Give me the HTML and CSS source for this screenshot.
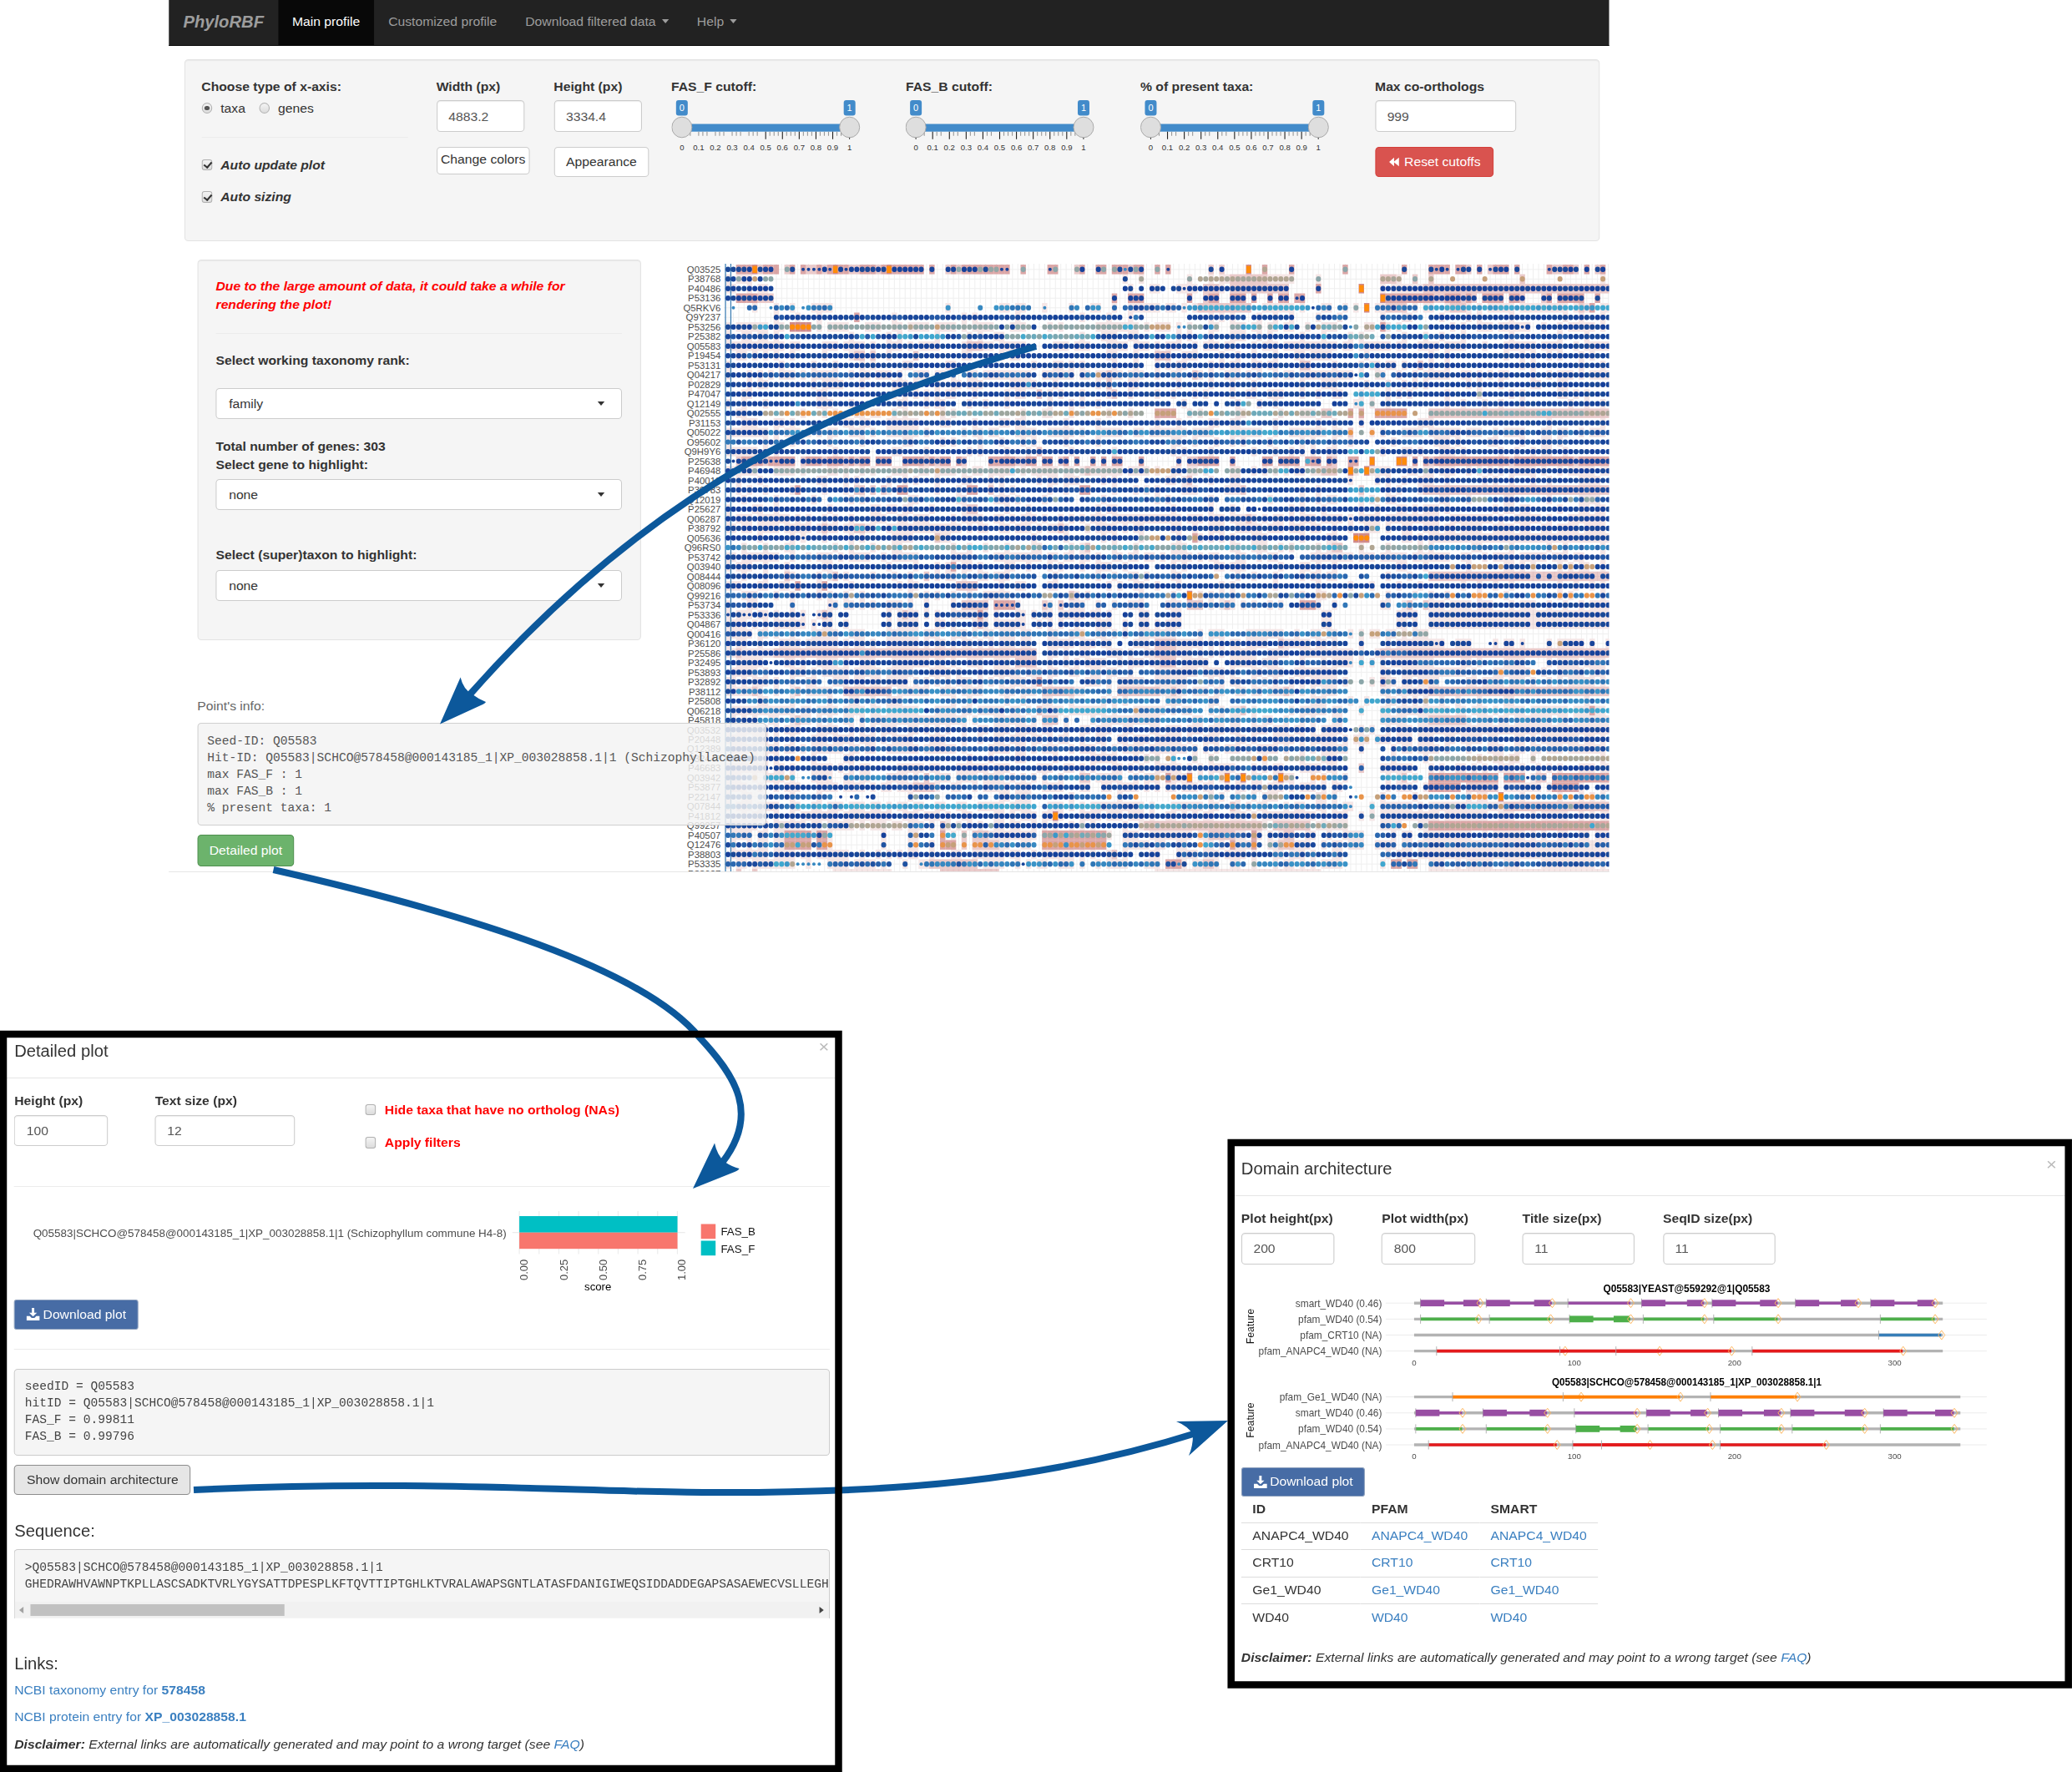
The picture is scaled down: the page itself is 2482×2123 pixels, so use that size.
FILE: index.html
```html
<!DOCTYPE html>
<html lang="en">
<head>
<meta charset="utf-8">
<title>PhyloRBF</title>
<link rel="stylesheet" href="styles.css">
</head>
<body>
<svg class="defs" width="0" height="0">
  <symbol id="ico-download" viewBox="0 0 16 16"><path d="M6.500 0h3v6h3.300L8 11 3.200 6h3.300zM0 10.500h4l2.300 2.300h3.400l2.300-2.300h4V16H0z" fill="#fff"/></symbol>
  <symbol id="ico-back" viewBox="0 0 16 16"><path d="M7.500 1v6.300L15 1v14L7.500 8.700V15L0 8z" fill="#fff"/></symbol>
</svg>
<div class="stage">

  <section class="win profile">
    <nav class="navbar">
      <a class="brand">PhyloRBF</a>
      <a class="tab active">Main profile</a>
      <a class="tab">Customized profile</a>
      <a class="tab">Download filtered data <i class="caret"></i></a>
      <a class="tab">Help <i class="caret"></i></a>
    </nav>

    <div class="well top">
      <div class="axis">
        <b class="lbl">Choose type of x-axis:</b>
        <div class="radios"><i class="radio on"></i><span>taxa</span><i class="radio second"></i><span>genes</span></div>
        <hr>
        <label class="opt"><i class="check on"></i><span>Auto update plot</span></label>
        <label class="opt"><i class="check on"></i><span>Auto sizing</span></label>
      </div>
      <div class="col"><b class="lbl">Width (px)</b><div class="input w101">4883.2</div><div class="btn plain tight">Change colors</div></div>
      <div class="col"><b class="lbl">Height (px)</b><div class="input w101">3334.4</div><div class="btn plain">Appearance</div></div>
      <div class="col"><b class="lbl">FAS_F cutoff:</b><svg class="slider" data-first="5" viewBox="0 0 230 70" preserveAspectRatio="none"></svg></div>
      <div class="col"><b class="lbl">FAS_B cutoff:</b><svg class="slider" data-first="0" viewBox="0 0 230 70" preserveAspectRatio="none"></svg></div>
      <div class="col"><b class="lbl">% of present taxa:</b><svg class="slider" data-first="0" viewBox="0 0 230 70" preserveAspectRatio="none"></svg></div>
      <div class="col"><b class="lbl">Max co-orthologs</b><div class="input w162">999</div><div class="btn danger"><svg class="ico"><use href="#ico-back"/></svg> Reset cutoffs</div></div>
    </div>

    <div class="main">
      <div class="side">
        <div class="well pick">
          <p class="warn">Due to the large amount of data, it could take a while for rendering the plot!</p>
          <hr>
          <b class="lbl rank">Select working taxonomy rank:</b>
          <div class="select">family<i class="caret"></i></div>
          <b class="lbl total">Total number of genes: 303</b>
          <b class="lbl gene">Select gene to highlight:</b>
          <div class="select">none<i class="caret"></i></div>
          <b class="lbl taxon">Select (super)taxon to highlight:</b>
          <div class="select">none<i class="caret"></i></div>
        </div>
        <div class="info">Point's info:</div>
        <pre class="point">Seed-ID: Q05583
Hit-ID: Q05583|SCHCO@578458@000143185_1|XP_003028858.1|1 (Schizophyllaceae)
max FAS_F : 1
max FAS_B : 1
% present taxa: 1</pre>
        <div class="btn success">Detailed plot</div>
      </div>
      <svg id="heat" viewBox="815 311 1113 733" preserveAspectRatio="none"></svg>
    </div>
  </section>

  <section class="win detail">
    <header><h4>Detailed plot</h4><span class="close">×</span></header>
    <div class="fields">
      <div class="f1"><b class="lbl">Height (px)</b><div class="input">100</div></div>
      <div class="f2"><b class="lbl">Text size (px)</b><div class="input">12</div></div>
      <div class="flags">
        <label><i class="check"></i>Hide taxa that have no ortholog (NAs)</label>
        <label><i class="check"></i>Apply filters</label>
      </div>
    </div>
    <hr>
    <svg id="score" viewBox="17 1440 976 118" preserveAspectRatio="none"></svg>
    <div class="btn primary"><svg class="ico"><use href="#ico-download"/></svg> Download plot</div>
    <hr class="second">
    <pre class="ids">seedID = Q05583
hitID = Q05583|SCHCO@578458@000143185_1|XP_003028858.1|1
FAS_F = 0.99811
FAS_B = 0.99796</pre>
    <div class="btn grey">Show domain architecture</div>
    <h4 class="seqh">Sequence:</h4>
    <div class="seq">
      <pre>&gt;Q05583|SCHCO@578458@000143185_1|XP_003028858.1|1
GHEDRAWHVAWNPTKPLLASCSADKTVRLYGYSATTDPESPLKFTQVTTIPTGHLKTVRALAWAPSGNTLATASFDANIGIWEQSIDDADDEGAPSASAEWECVSLLEGH</pre>
      <div class="scroll"><i class="al"></i><i class="thumb"></i><i class="ar"></i></div>
    </div>
    <h4 class="linkh">Links:</h4>
    <p class="line"><a>NCBI taxonomy entry for <b>578458</b></a></p>
    <p class="line"><a>NCBI protein entry for <b>XP_003028858.1</b></a></p>
    <p class="line note"><b>Disclaimer:</b> External links are automatically generated and may point to a wrong target (see <a>FAQ</a>)</p>
  </section>

  <section class="win domain">
    <header><h4>Domain architecture</h4><span class="close">×</span></header>
    <div class="fields">
      <div><b class="lbl">Plot height(px)</b><div class="input w107">200</div></div>
      <div><b class="lbl">Plot width(px)</b><div class="input w107">800</div></div>
      <div><b class="lbl">Title size(px)</b><div class="input w129">11</div></div>
      <div><b class="lbl">SeqID size(px)</b><div class="input w129">11</div></div>
    </div>
    <svg id="arch" viewBox="1487 1530 960 228" preserveAspectRatio="none"></svg>
    <div class="btn primary"><svg class="ico"><use href="#ico-download"/></svg> Download plot</div>
    <table>
      <tr><th>ID</th><th>PFAM</th><th>SMART</th></tr>
      <tr><td>ANAPC4_WD40</td><td><a>ANAPC4_WD40</a></td><td><a>ANAPC4_WD40</a></td></tr>
      <tr><td>CRT10</td><td><a>CRT10</a></td><td><a>CRT10</a></td></tr>
      <tr><td>Ge1_WD40</td><td><a>Ge1_WD40</a></td><td><a>Ge1_WD40</a></td></tr>
      <tr><td>WD40</td><td><a>WD40</a></td><td><a>WD40</a></td></tr>
    </table>
    <p class="line note"><b>Disclaimer:</b> External links are automatically generated and may point to a wrong target (see <a>FAQ</a>)</p>
  </section>
</div>

<svg class="arrows" viewBox="0 0 2482 2123">
  <g fill="none" stroke="#0c589b" stroke-width="8">
    <path d="M1241 415C1005 484 785 580 562 833"/>
    <path d="M327.500 1042C560 1095 770 1160 838 1243C882 1290 910 1335 865 1393"/>
    <path d="M232 1785C500 1772 700 1788 850 1788C1070 1789 1250 1775 1436 1716"/>
  </g>
  <g fill="#0c589b">
    <path d="M527 867.500L551.600 811.500Q555 826 566 832Q574 838 582 841Q581 843 576 845Z"/>
    <path d="M830 1424L856 1369.500Q859 1384 868 1392Q877 1398 885.500 1400Q885 1402 880 1404Z"/>
    <path d="M1471 1702L1409 1703Q1424 1709 1429 1719Q1429 1733 1424 1744Z"/>
  </g>
  <g fill="none" stroke="#000" stroke-width="8.500">
    <rect x="4" y="1239" width="1000.500" height="880"/>
    <rect x="1474.700" y="1369" width="1003" height="649.500"/>
  </g>
</svg>
<script src="plots.js"></script>
</body>
</html>
```
FILE: styles.css
```css
* { box-sizing: border-box; }
body { margin: 0; width: 2482px; height: 2123px; overflow: hidden; position: relative; background: #fff;
  font: 15.08px/21.5px "Liberation Sans", Arial, sans-serif; color: #333; }
.defs { position: absolute; }
/* The windows are captured slightly wider than tall */
.stage { position: absolute; left: 0; top: 0; width: 2382px; height: 2123px; transform: scaleX(1.042); transform-origin: 0 0; }
.win { position: absolute; background: #fff; }
.arrows { position: absolute; left: 0; top: 0; width: 2482px; height: 2123px; }
a { color: #3a7fc0; }
h4 { margin: 0; font-size: 19.4px; line-height: 22px; font-weight: 400; }
hr { border: 0; border-top: 1.5px solid #ececec; margin: 0; }
p { margin: 0; }
pre { margin: 0; font: 14px/20px "Liberation Mono", "Courier New", monospace; color: #444; }
.lbl { display: block; font-weight: 700; height: 21.5px; white-space: nowrap; }
.input { height: 38px; border: 1.3px solid #ccc; border-radius: 4.5px; background: #fff; color: #555;
  padding: 0 13px; line-height: 37px; box-shadow: inset 0 1px 1px rgba(0,0,0,.08); }
.btn { display: flex; align-items: center; justify-content: center; gap: 3px; border: 1.3px solid #ccc; border-radius: 4.5px; height: 36px; white-space: nowrap; }
.ico { width: 16px; height: 15px; flex: none; }
.danger .ico { width: 16px; height: 12px; }
.caret { display: inline-block; border: 4.8px solid transparent; border-top: 5px solid currentColor; border-bottom: 0; vertical-align: 3px; margin-left: 2.5px; }
.radio, .check { display: inline-block; width: 12.5px; height: 13.5px; background: linear-gradient(#f4f4f4, #dcdcdc); border: 1px solid #b0b0b0; flex: none; position: relative; }
.radio { border-radius: 50%; }
.check { border-radius: 3px; }
.radio.on::after { content: ""; position: absolute; left: 2.5px; top: 3px; width: 5.5px; height: 5.5px; border-radius: 50%; background: #555; }
.check.on::after { content: ""; position: absolute; left: 3.5px; top: .5px; width: 3.500px; height: 7px; border: solid #333; border-width: 0 2.2px 2.2px 0; transform: rotate(40deg); }
.well { background: #f5f5f5; border: 1.3px solid #e3e3e3; border-radius: 4.5px; box-shadow: inset 0 1px 1px rgba(0,0,0,.05); }

/* Main profile window */
.profile { left: 194.3px; top: 0; width: 1656px; height: 1045px; overflow: hidden; border-bottom: 1.3px solid #e6e6e6; }
.navbar { display: flex; height: 55px; background: #222; border-bottom: 1.3px solid #080808; line-height: 52.5px; }
.navbar a { padding: 0 16.3px; color: #9d9d9d; white-space: nowrap; }
.navbar .brand { font-size: 19.4px; font-weight: 700; font-style: italic; }
.navbar .active { background: #080808; color: #fff; }
.well.top { margin: 16px 0 0 17.5px; width: 1627px; height: 218px; padding: 20.500px 0 0 18.800px; display: grid; grid-template-columns: 270px 135px 135px 269.700px 269.700px 269.700px 1fr; }
.radios { display: flex; align-items: center; height: 21px; margin-top: 5px; }
.radios span { margin-left: 9.500px; }
.radios .second { margin-left: 15.500px; }
.axis hr { width: 237px; margin-top: 24px; }
.opt { display: flex; align-items: center; gap: 9.5px; font-weight: 700; font-style: italic; height: 21.5px; margin: 21.500px 0 17px; }
.opt + .opt { margin-top: 0; }
.col .input { margin: 6px 0 18px; }
.w101 { width: 101.5px; }
.w162 { width: 162px; }
.plain { background: #fff; }
.btn.plain { width: 109.500px; }
.btn.tight { width: 107.500px; height: 32.5px; padding-bottom: 3px; }
.danger { width: 136px; background: #d9534f; border-color: #d43f3a; color: #fff; }
.slider { display: block; width: 220.700px; height: 70px; margin-top: 5px; }
.main { display: flex; margin-top: 22.3px; }
.side { width: 555.3px; flex: none; padding-left: 32.5px; position: relative; z-index: 1; }
#heat { flex: none; width: 1068.100px; height: 733px; display: block; margin-left: 32.400px; }
.well.pick { width: 509.900px; height: 456px; padding: 20px 20.500px 0 20.300px; }
.warn { color: #f00; font-weight: 700; font-style: italic; margin-bottom: 23.500px; }
.select { height: 37px; line-height: 35.5px; background: #fff; border: 1.3px solid #ccc; border-radius: 4.500px; padding: 0 19px 0 14px; display: flex; justify-content: space-between; align-items: center; color: #333; }
.rank { margin: 21.500px 0 22px; }
.total { margin-top: 22.500px; }
.gene { margin-bottom: 6.500px; }
.taxon { margin: 43px 0 8px; }
.info { margin: 67.500px 0 10px; color: #666; }
.point { width: 653.900px; height: 122.500px; padding: 11px 10.500px; background: rgba(243,243,243,.83); border: 1.3px solid #cfcfcf; border-radius: 4.500px; color: #555; }
.success { width: 111.500px; height: 37.500px; margin-top: 11.500px; background: #6cb36c; border-color: #4e8f4e; color: #fff; }

/* Dialogs */
.win header { display: flex; justify-content: space-between; border-bottom: 1.5px solid #e5e5e5; }
.close { font-size: 21px; color: #bbb; }
.detail { left: 0; top: 1235px; width: 968px; height: 888px; padding: 7.500px 7.7px; }
.detail > * { margin-left: 8.800px; margin-right: 6.600px; }
.detail > header { margin: 0; padding: 5.500px 7px 0 8.800px; height: 49.500px; }
.detail .close { margin-top: -5px; }
.detail .fields { display: flex; margin-top: 15.500px; height: 113px; }
.f1 { width: 161.700px; } .f1 .input { width: 108px; }
.f2 { width: 241.600px; } .f2 .input { width: 161px; }
.detail .input { height: 37px; line-height: 35.500px; margin-top: 7px; }
.flags { padding-top: 11px; }
.flags label { display: flex; align-items: center; gap: 10px; height: 22px; margin-bottom: 17.500px; color: #f00; font-weight: 700; white-space: nowrap; }
#score { display: block; width: 936.700px; height: 118px; margin-top: 17px; }
.primary { width: 142.500px; height: 36.500px; background: #476ca5; border-color: #8da0bd; border-radius: 3px; color: #fff; }
hr.second { margin-top: 23px; }
.ids { margin-top: 23px; height: 103.500px; padding: 10px 11px; background: #f5f5f5; border: 1.3px solid #ccc; border-radius: 4.500px; }
.grey { width: 203px; margin-top: 11px; background: #e6e6e6; border-color: #8c8c8c; }
.seqh { margin-top: 32.500px; }
.seq { margin-top: 11px; height: 82.500px; background: #f5f5f5; border: 1.3px solid #ccc; border-bottom: 0; border-radius: 4.500px 4.500px 0 0; overflow: hidden; }
.seq pre { padding: 11px 11px 0; height: 62px; }
.scroll { display: flex; align-items: center; height: 19px; background: #f1f1f1; padding: 0 6px 0 5px; }
.scroll .al { border: 4.500px solid transparent; border-left: 0; border-right: 5px solid #a3a3a3; }
.scroll .ar { border: 4.500px solid transparent; border-right: 0; border-left: 5px solid #444; margin-left: auto; }
.thumb { width: 291.500px; height: 14px; background: #c1c1c1; margin-left: 8px; }
.linkh { margin-top: 43.500px; }
.line { height: 32.500px; line-height: 21.500px; white-space: nowrap; }
.linkh + .line { margin-top: 9.500px; }
.note { font-style: italic; word-spacing: .07px; }

.domain { left: 1411.2px; top: 1365px; width: 970.700px; height: 658px; padding: 7.500px 8px; }
.domain > * { margin-left: 7.700px; }
.domain > header { margin: 0; padding: 16px 9.500px 0 7.700px; height: 60.500px; }
.domain .close { margin-top: -5px; }
.domain .fields { display: grid; grid-template-columns: repeat(4, 161.600px); margin-top: 15.500px; height: 81px; }
.domain .input { height: 37.500px; line-height: 36px; margin-top: 7px; }
.w107 { width: 107.500px; } .w129 { width: 129px; }
#arch { display: block; width: 921.300px; height: 228px; }
.domain .primary { height: 35px; }
table { border-collapse: collapse; width: 410.500px; table-layout: fixed; margin-top: -.7px; }
th, td { text-align: left; padding: 0 0 0 13px; height: 32.500px; line-height: 20px; border-top: 1.5px solid #ddd; white-space: nowrap; }
td { padding-bottom: 1.500px; }
th { border-top: 0; }
.domain .note { margin-top: 20.500px; }
```
FILE: plots.js
```js
const el = (id, html) => { document.getElementById(id).innerHTML = html; };

/* range sliders */
document.querySelectorAll('.slider').forEach(s => {
  const first = +s.dataset.first;
  let h = '<rect x="12" y="29.5" width="202" height="9.2" fill="#428bca"/>';
  for (let i = 0; i <= 40; i++) {
    const big = i % 4 === 0, x = 12.4 + i * 5.02;
    if (!big && i % 4 === 3 && i < 20) continue;
    const tall = big && i / 4 >= first;
    h += `<path d="M${x} 38.7v${tall ? 9 : 5}" stroke="${tall ? '#222' : '#999'}" stroke-width="1.1"/>`;
  }
  for (let i = 0; i <= 10; i++)
    h += `<text x="${12.4 + i * 20.08}" y="61.5" font-size="9.6" text-anchor="middle" fill="#333">${i === 0 ? '0' : i === 10 ? '1' : '0.' + i}</text>`;
  [12.4, 213.3].forEach((x, i) => {
    h += `<rect x="${x - 7}" y="1" width="14" height="18.5" rx="3" fill="#428bca"/><text x="${x}" y="14.5" font-size="11" text-anchor="middle" fill="#fff">${i}</text>`;
    h += `<ellipse cx="${x}" cy="33.5" rx="12" ry="12.3" fill="#dedede" stroke="#aaa"/>`;
  });
  s.innerHTML = h;
});

/* phylogenetic profile: id, dots ("from-to type"), shaded cells ("from-to:level"), default shading */
const rows = [
['Q03525','0-8N 5O 11g 12N 14-17s 18N 19s 20O 21N 22s 23-36N 30O 38N 41-49N 43g 47g 49-50g 51-52s 55g 60s 61g 65g 66N 69N 70g 72g 73N 74k 75N 76g 77N 80g 82s 90N 92N 97O 100t 105N 115g 126N 131N 132s 133N 134s 136s 137-138N 140N 142s 143-145N 147N 153s 154-158N 160N 162-163N','9:3',3],
['P38768','0-1N 2g 3-4N 5T 6N 7-8g 74N 77t 86g 88-105t 110g 122-125t 128g 131t 135T 141T 148T 155T 163T','94-100:2 122-124:2 128:2 131:2 148:2',1],
['P40486','0-8N 74-75N 77N 79-81N 83-84N 85s 86-104N 110N 118O 122-164N','89-91:2 94-104:2 110:3 130-164:2',1],
['P53136','0-8N 72N 75-77N 86N 89-91N 94-96N 98N 101N 103-104N 106s 107N 122O 123-164N 140. 145. 149-151. 154. 160-161. 163-164.','',3],
['Q5RKV6','1k 4-5d 8k 9-12d 14k 15-19d 17b 41d 47d 50-56d 59k 64-65d 67-69d 72d 74-75d 76-84b 85k 86-108c 109s 110-112d 114-115d 117g 119O 121-128d 124b 130-164c','88-97:2 123-126:2 135-137:2 159:2 161:3',1],
['Q9Y237','9-73n 75s 76-77b 86-96n 98-105n 110-115b 122-129b 131-164N','24:3',0],
['P53256','0-4N 5g 6-7c 8-9N 10-11g 12-15P 16-17g 19-50g 34t 39T 51N 52g 53N 54-56g 57N 59-73g 74-75c 76-78g 79-82T 84k 85k 86-88g 89N 90c 91g 94-95g 96-98c 99g 101g 102-103c 104N 105c 106N 108g 109N 110-114x 115N 116k 117g 119-120t 121c 122N 123-126c 127-128N 129c 130g 131-164N 148s 150.','12-15:4 122:3',1],
['P25382','0-164n 11c 25c 27c 32-34c 36-40c 44g 52-68y 79c 82-83c 88c 111c 116-120x 121. 123g 130c','',0],
['Q05583','0-164N 58. 75. 88. 117-118d','45-47:2',1],
['P19454','0-164N 4d 117d 119d','24-25:2 27:2 80-82:2 35:2',0],
['P53131','0-164N 11d 78-79. 117-119b 120c 125.','107-108:2 129:2',0],
['Q04217','0-6N 7-130b 24-32N 33. 38. 43. 58. 65. 69T 117s 118c 120. 121g 123. 131-164N','71:2 87:2',1],
['P02829','0-164N 56d 72d 123d','71:2',0],
['P47047','0-164N 116. 117-121c 140g','58:2 72:2',0],
['Q12149','0-164N 13d 43. 83. 86. 90. 92. 96c 97g 98. 111-112. 116. 117k 118c 119. 120g 121.','',0],
['Q02555','0-6N 7-77x 11o 14-15o 19-30o 37o 39o 64o 68-69o 72o 78-79. 80-83T 84-85. 86-115x 90o 116T 117. 118T 119-120. 121-126o 127. 128T 129-130. 131-164g 141c 145-153y 160-164t','80-83:3 111-112:2 116:3 118:3 121-126:3 131-164:2',0],
['P31153','0-164N 97c 117. 119.','',0],
['Q05022','0-7N 8-115d 90-102c 116o 117. 118g 119. 120o 121. 122-128b 129-130c 131-164b','116:2',1],
['O95602','0-164b 26-27N 39-42N 58. 120. 131-164n','',0],
['Q9H9Y6','0-164N 27. 72c 108. 116-117c 119-120c 121g','58:2',0],
['P25638','0-164N 1s 8-9s 13. 27. 31-32. 42. 45-48. 50s 58. 61. 64. 66-67. 69. 71. 74-76. 78-83. 85. 92-93. 95-99. 102. 107. 108c 109s 111. 114-115. 116-117s 118-119. 120O 121-124. 125-126O 127. 129.','',3],
['P46948','0-1N 2c 3-8N 5g 9-73g 34t 39T 53c 74-75N 76g 77N 78g 79-82T 83N 84-85N 86-88g 89-90c 91g 92. 93-95g 96-100N 101-102g 103-104c 105-107N 108-109g 110-114x 115N 116O 117g 118c 119O 120t 121c 122-164N 130g 140c','67:2 111-113:2',1],
['P40018','0-164N 77. 116s 117-120.','86:2',0],
['P39783','0-164n 24d 28c 30d 78d 116-121c','13:3 24-25:2 27:2 29:2 32-33:3 45-46:3 49:2 66-67:3 96:2 118:2 130-164:2 137.',0],
['Q12019','0-6N 7-164b 18. 20c 33g 43c 49c 61g 65. 92. 101c 116-120c 121t 135-145b 139-141g 149-150c 157g 160-161g','',0],
['P25627','0-164N 91. 96. 99s','45-46:2',0],
['Q06287','0-164N 116s','9-11:1 79-83:1 97:2',1],
['P38792','0-164N 24-25c 28c 31c 67t 120t 121c 122.','18:2 24-25:2 62:2',1],
['Q05636','0-164N 14s 39T 77-78g 79-80T 82T 86g 87T 116. 117-119P 120-121.','39:2 117-119:4 87:3 131-164:1',0],
['Q96RS0','0-2d 3-115y 24t 28t 30t 33-34t 54t 56t 59-60d 62b 68t 116-117. 118t 119. 120t 121. 122-130g 131-164d 145g 154T','67:2 113-114:2',0],
['P53742','0-164b 0-9N 106. 131-164n','',1],
['Q03940','0-164N 42d 79. 135T 139-141T 144T 150T 155T 157T 160-161T','42:3',0],
['Q08444','0-6N 7-115b 58. 77g 91T 92. 116-117. 118-119b 120-121. 122-129b 130c 131-164n 150. 152. 154. 162.','11:2 20:2 37:2 131-164:2',0],
['Q08096','0-164N 58. 72. 121.','13:3 18:3 43-46:2',0],
['Q99216','0-164b 23t 35t 59-60t 64t 82t 84c 86O 87-88T 96T 101-102t 105g 110-111T 112t 114o 116g 118T 119-120d 121T 122. 127-130d 131-164b 135o 139-141o 144o 150o 155o 157o 160-161o','5:1 64:2',0],
['P53734','0-8n 12b 19s 20b 22-34b 37N 42-48n 50-53s 54b 59s 60b 62s 63-66b 69-70b 72-78b 79. 81-94b 95. 96-103b 104. 105-110n 113N 115b 122-123b 125-130d 131-164N','44-48:2 50-53:3 59:2 62:2 86-88:2 93:2 107-109:3 127:2 130:2',1],
['P53336','0s 1-2N 3-4s 5-13N 7s 14s 16-17s 18-19N 21-22N 29-30N 32-35N 37N 39-48n 50-54N 55s 57-60N 62-71N 74-75N 77-78N 80-84N 111-112N 125-128N 131-164N 150.','18:2 33:2 47:3 131-164:1',1],
['Q04867','0-13N 14s 16-17s 18-19N 21-22N 29-30N 32-35N 37N 39-54N 49. 55s 57-60N 62-71N 74-75N 77-78N 80-84N 111-112N 125-128N 131-164N 150.','47:2 131-164:1',1],
['Q00416','0-4n 6-115d 18T 66T 74N 89. 111T 116k 118g 120-121T 122-124d 125-127t 128b 129-130g','81-83:1 66:1',1],
['P36120','0-115N 58. 72. 74. 118b 122-131N 132s 133N 135-138N 142-143s 145-146N 148s 153N 155T 156-159N 161N 164N','80-83:2 103:2',1],
['P25586','0-164N 25d 58. 118-126b','2:2 9-57:2 80-83:2 122-164:2',1],
['P32495','0-164N 8s 20-21c 90. 92. 100-110b 116k 117. 118c 119. 120c 121. 128-164b 151-152. 156N','54-57:2 81-83:2',1],
['P53893','0-164b 0-4N 36-52N 76. 84-86N 103-115N 117-121. 116. 122-130N 144o 150o','',1],
['P32892','0-164b 0-6N 18. 22-33N 34. 65. 72. 88g 93. 105-110N 111c 116g 117. 118g 119. 120g 121. 122N 123g 125. 126-128N 130o 133. 142-164d','58:3 80-83:1 122:2',1],
['P38112','0-1N 2-164d 22-23N 26-29n 72. 84N 106N 116-121. 127-131N 142-146n','5:2 13:2 22-30:2 59-64:2 73-80:2 83:2 104:2 131-164:2',1],
['P25808','0-164d 0-3N 6N 24N 31N 46N 81. 92-93. 106N 118. 119-121c 125-129n 130t','83:1',0],
['Q06218','0-4n 5-164d 23-37c 37N 51N 60N 62-70c 76T 89. 94-102c 116-121. 118c 122-123c 129N 130-164c','58:2 161:3 96:2',1],
['P45818','0-164d 0-5n 24. 45. 58. 62. 64. 66-67. 112. 116-121.','13:2 27-40:1 59-61:2 131-137:2',1],
['Q03532','0-164N 110. 116s 117g 118b 119g 120b 121.','131-164:1',1],
['P20448','0-164n 72. 116. 117T 118d 119T 120. 121d 128.','83:1',1],
['Q12389','0-164b 88. 116-117. 118b 119-121. 123.','',1],
['P32447','0-77N 13o 19-21. 78-80g 81. 82T 83c 84-85k 86b 87g 88-89. 90-91g 92-93. 94-97g 98T 99N 100o 101-102g 103. 104-111x 112N 113-114N 115g 116-121. 122-130b 131-164t 132-137g 148-149. 151.','',0],
['P46683','0-164N 8s 94-97b 116-121. 118b 129-130.','80-83:1 118:2',1],
['Q03942','0-4b 5T 7-12c 11T 13. 14-15k 16-18b 19k 22-41d 42. 43-79d 58. 74. 80-81T 82b 83T 84-85N 86O 87. 88-91c 92T 93O 94-95d 96O 97T 98-100c 101T 102d 103O 104T 105g 106s 109-111o 112-115d 122-129c 131-164d 144. 149s 153.','37:2 66-67:2 82:3 126:2 131-143:3 145-148:3 151-152:2 154-164:3',1],
['P53877','0-164n 38-60b 68-69. 81. 100t 112. 116k 117-121. 129. 144. 152. 161.','35-38:2 131-136:3 138-143:2 154-158:3',1],
['P22147','0-19b 5. 21s 23s 24b 26s 27b 34-39b 35g 39g 41-45b 47-48b 50-70b 71o 73-75b 76o 83o 84-115d 88T 90g 93. 96g 99. 101-103t 105-107N 108o 110g 111o 114-115. 116s 117k 118o 121T 122b 123o 124b 126-127o 129-130T 128N 131-164d 135o 139-141o 144O 150o 155o 157o 160-161o','',0],
['Q07844','0-12b 13-164c 20b 58. 59b 70-76b 85-115d 116k 117-119. 120c 121. 122-164b 135g 138-141c 144T 157g','94:2 131-143:1 145-164:2',1],
['P41812','0-164N 58. 61O 98T 117. 116. 118b 119. 120g 121.','24-30:1 122-132:1',1],
['Q99257','0-22n 10g 18g 23-33t 34-38b 36d 39. 40-76N 41t 43g 49g 66g 77-99t 80g 85g 100-115x 122-129b 126o 124c 128g 127. 130g 131-164t 161c','9:1 40:2 78-99:2 102-108:2 131-164:3',1],
['P40507','0-9b 5. 8d 11-16c 10d 17b 18g 19c 29N 34-38b 35T 40o 41-42c 44g 46-49d 50-56N 57b 59-71x 61c 63c 72. 74-115n 88o 89-95d 98T 100. 110. 116-118d 121-124b 125. 126-127N 128. 129-130b 131-164N 161.','11-15:3 17-18:3 34:1 40:3 44:2 46-48:2 59-70:3 98:3 90-94:2 104-105:2',1],
['Q12476','0-7b 8-10d 11-15T 13c 16-17b 18-19o 29b 34-38b 35o 40o 41-42T 44o 46-47o 48b 49o 50-56d 57d 59-62o 63d 64-70o 61T 66T 69T 71d 74-115b 88o 89-90c 94o 98o 100. 101g 103t 104-105o 106N 110. 116-118d 121-124b 126-128b 125. 129-164b 161.','11-15:3 17-18:3 40-42:3 44:2 46-50:2 59-70:3 94:3 98:3 103-105:2 131-164:1',1],
['P38803','0-164N 5-8b 76. 81-83. 85-90b 102-115b 117-121. 116. 122-123d','72:2 131-164:1',1],
['P53335','0-8b 9-12c 12t 13-17k 19-30b 31. 33b 34-35. 36k 37-80d 43b 55s 65. 67. 81. 82-83b 84k 85N 86. 87-91d 92-93. 94-115d 97. 98g 116-121. 122c 123. 124-128b 131-164b','9-10:1 38-46:2 82-84:3 89-90:2 124-125:3 127-128:3 138-141:1',1],
['P38627','','2:2 5:2 20-30:1 40-50:2 80-110:1 131-164:1',0]
];
const solid = { N: ['#17449a','#15409a','#1a4897'], n: ['#17449a','#17449a','#2458a6','#1a4a9b'], b: ['#1f52a1','#2b68b0','#1a489c','#3278b8','#2860aa'],
  d: ['#3788c1','#2f76b6','#3a93c7','#2b69b0'], c: ['#3fa7cf','#3b97c8','#45a9cc'], g: ['#8ba6a9','#93a6a5'], t: ['#b0a592','#a6a69a'], T: ['#c5a07a'],
  o: ['#e8944a'], O: ['#ff8c0a'], P: ['#ff8c0a'], x: ['#8ba6a9','#6faab9','#b0a592','#9da69e'], y: ['#6aaabc','#7ba8b2','#45a9cc','#8ba6a9'], s: ['#17449a'], k: ['#3788c1'] };
const shade = [0, .2, .42, .7, .92];
let seed = 7;
const rnd = () => (seed = (seed * 1103515245 + 12345) % 2147483648) / 2147483648;
const X0 = 872.2, DX = 6.43, Y0 = 322.8, DY = 11.49;
let tiles = '', blanks = '', dots = '', labels = '', grid = '';
for (let c = 0; c < 165; c++) grid += `<path d="M${X0 + c * DX} 316V1044"/>`;
const columnTint = Array.from({ length: 165 }, () => rnd());
rows.forEach(([id, spec, pink, base], r) => {
  const y = Y0 + r * DY, cell = Array(165).fill('.'), level = Array(165).fill(0);
  grid += `<path d="M867 ${y}H1928"/>`;
  (spec.match(/\S+/g) || []).forEach(t => {
    const [, a, b, k] = t.match(/^(\d+)(?:-(\d+))?(.)$/);
    for (let i = +a; i <= +(b || a); i++) cell[i] = k;
  });
  cell.forEach((k, i) => {
    if (k === '.') return;
    if (base === 3) level[i] = i < 2 ? 0 : rnd() < .75 ? 3 : 2;
    else if (base === 1) level[i] = rnd() < .4 + columnTint[i] * .5 ? 1 : 0;
    else level[i] = rnd() < columnTint[i] * .5 ? 1 : 0;
    if (k === 'O') level[i] = 4;
  });
  (pink.match(/\S+:\d/g) || []).forEach(t => {
    const [, a, b, k] = t.match(/^(\d+)(?:-(\d+))?:(\d)$/);
    for (let i = +a; i <= +(b || a); i++) level[i] = +k;
  });
  cell.forEach((k, i) => {
    const x = X0 + i * DX;
    if (k !== '.') blanks += `<rect x="${x - 3.3}" y="${y - 5.7}" width="6.6" height="11.5" fill="#fff"/>`;
    if (level[i]) tiles += `<rect x="${x - 3.22}" y="${y - 5.75}" width="6.44" height="11.5" fill="#cc8080" fill-opacity="${shade[level[i]]}"/>`;
    if (k === '.') return;
    const set = solid[k], col = set[Math.floor(rnd() * set.length)];
    if (k === 'O') { dots += `<rect x="${x - 2.7}" y="${y - 4.2}" width="5.4" height="8.4" fill="${col}"/>`; return; }
    const small = k === 's' || k === 'k';
    dots += `<ellipse cx="${x}" cy="${y}" rx="${small ? 2 : 3}" ry="${small ? 2 : 3.2}" fill="${col}"/>`;
  });
  labels += `<text x="863.5" y="${y + 4.2}" text-anchor="end">${id}</text>`;
});
el('heat', `<g stroke="#efefef" stroke-width="1">${grid}</g>${blanks}${tiles}<g stroke="#3f7fb4" stroke-width="1.3"><path d="M869.2 316V1044M875.6 316V1044"/></g>${dots}<g font-size="11.4" fill="#4d4d4d">${labels}</g>`);

/* score bar chart */
let s = '<g stroke="#ececec" stroke-width="1.2">';
for (let i = 0; i <= 8; i++) s += `<path d="M${622.4 + i * 23.67} 1452V1503.500"/>`;
s += '<path d="M614 1477.700H821"/></g><rect x="622.4" y="1458" width="189.4" height="19.700" fill="#00bfc4"/><rect x="622.4" y="1477.700" width="189.4" height="19.500" fill="#f8766d"/>';
s += '<text x="40" y="1483" font-size="13.600" textLength="567" lengthAdjust="spacingAndGlyphs" fill="#4d4d4d">Q05583|SCHCO@578458@000143185_1|XP_003028858.1|1 (Schizophyllum commune H4-8)</text>';
['0.00', '0.25', '0.50', '0.75', '1.00'].forEach((t, i) => {
  s += `<text transform="translate(${632.8 + i * 47.2} 1535) rotate(-90)" font-size="13" fill="#4d4d4d">${t}</text>`;
});
s += '<text x="716.500" y="1547.500" font-size="13.200" text-anchor="middle" fill="#000">score</text>';
s += '<rect x="840" y="1467.500" width="17.500" height="17.700" fill="#f8766d"/><rect x="840" y="1487.500" width="17.500" height="17.700" fill="#00bfc4"/><g font-size="13.300" fill="#111"><text x="863.700" y="1481.300" textLength="41.500">FAS_B</text><text x="863.700" y="1501.700" textLength="41">FAS_F</text></g>';
el('score', s);

/* domain architecture: feature tracks in residues, [start, end, style] */
const px = v => 1694 + v * 1.919;
const panels = [
  { title: 'Q05583|YEAST@559292@1|Q05583', tw: 200, ty: 1548, y: 1561.2, len: 330, tracks: [
    ['smart_WD40 (0.46)', '#984ea3', [[4,41,2],[45,86,2],[96,135,0],[142,181,2],[186,227,2],[238,277,2],[285,325,2]]],
    ['pfam_WD40 (0.54)', '#4daf4a', [[4,40,0],[47,85,0],[97,135,2],[143,181,0],[187,227,0],[291,325,0]]],
    ['pfam_CRT10 (NA)', '#377eb8', [[290,329,1]]],
    ['pfam_ANAPC4_WD40 (NA)', '#e41a1c', [[14,94,1],[91,153,1],[126,198,1],[211,305,1]]]] },
  { title: 'Q05583|SCHCO@578458@000143185_1|XP_003028858.1|1', tw: 323, ty: 1660.500, y: 1673.6, len: 341, tracks: [
    ['pfam_Ge1_WD40 (NA)', '#ff7f00', [[24,104,1],[93,166,1],[185,239,1]]],
    ['smart_WD40 (0.46)', '#984ea3', [[1,30,3],[43,83,2],[100,139,0],[145,183,2],[190,229,2],[235,281,2],[293,337,2]]],
    ['pfam_WD40 (0.54)', '#4daf4a', [[1,30,0],[45,83,0],[101,139,2],[146,184,0],[191,229,0],[236,281,0],[291,337,0]]],
    ['pfam_ANAPC4_WD40 (NA)', '#e41a1c', [[9,89,1],[99,147,1],[117,186,1],[191,257,1]]]] }
];
let d = '';
panels.forEach(p => {
  d += `<text x="2020.500" y="${p.ty}" font-size="12.300" font-weight="700" fill="#000" text-anchor="middle" textLength="${p.tw}" lengthAdjust="spacingAndGlyphs">${p.title}</text>`;
  d += `<text transform="translate(1502 ${p.y + 28}) rotate(-90)" font-size="12.300" text-anchor="middle" fill="#111">Feature</text>`;
  p.tracks.forEach(([name, col, spans], i) => {
    const y = p.y + i * 19.15;
    d += `<text x="1655.500" y="${y + 4.500}" font-size="11.900" text-anchor="end" fill="#4d4d4d">${name}</text><path d="M1660 ${y}H2380" stroke="#ececec"/>`;
    d += `<path d="M1694 ${y}H${px(p.len)}" stroke="#b3b3b3" stroke-width="3.400"/>`;
    spans.forEach(([a, b, k]) => {
      const tail = px(a + (b - a) * .78);
      d += `<path d="M${px(a)} ${y}H${px(b)}" stroke="${col}" stroke-width="3.600"/><path d="M${px(a)} ${y - 5.500}v11" stroke="#aaa" stroke-width=".9"/>`;
      if (k >= 2) d += `<rect x="${px(a)}" y="${y - 3.900}" width="28.500" height="7.800" fill="${col}"/>`;
      if (k === 2) d += `<rect x="${tail - 4}" y="${y - 3.900}" width="${px(b) - tail + 3}" height="7.800" fill="${col}"/>`;
      d += `<path d="M${px(b) + .5} ${y - 5.500}l4 5.500l-4 5.500l-4 -5.500z" fill="none" stroke="#fdb863" stroke-width="1"/>`;
    });
  });
  [0, 100, 200, 300].forEach(v => { d += `<text x="${px(v)}" y="${p.y + 74.800}" font-size="9.700" text-anchor="middle" fill="#4d4d4d">${v}</text>`; });
});
el('arch', d);
```
